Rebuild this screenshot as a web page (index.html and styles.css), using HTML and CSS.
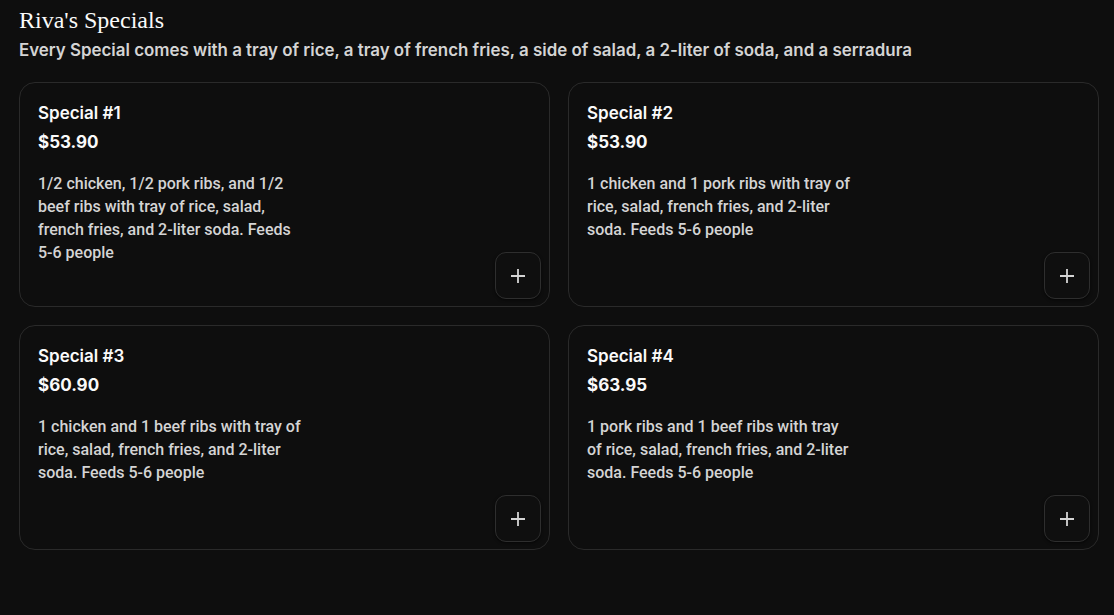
FILE: index.html
```html
<!DOCTYPE html>
<html lang="en">
<head>
<meta charset="utf-8">
<title>Riva's Specials</title>
<link rel="stylesheet" href="styles.css">
</head>
<body>
<main class="page">
  <h1 class="title">Riva's Specials</h1>
  <p class="subtitle">Every Special comes with a tray of rice, a tray of french fries, a side of salad, a 2-liter of soda, and a serradura</p>
  <section class="grid">
    <article class="card">
      <div class="card-body">
        <h2 class="card-name">Special #1</h2>
        <p class="card-price">$53.90</p>
        <p class="card-desc">1/2 chicken, 1/2 pork ribs, and 1/2 beef ribs with tray of rice, salad, french fries, and 2-liter soda. Feeds 5-6 people</p>
      </div>
      <button class="add-btn" aria-label="Add"><svg viewBox="0 0 16 16" width="16" height="16"><path d="M8 1v14M1 8h14"/></svg></button>
    </article>
    <article class="card">
      <div class="card-body">
        <h2 class="card-name">Special #2</h2>
        <p class="card-price">$53.90</p>
        <p class="card-desc">1 chicken and 1 pork ribs with tray of rice, salad, french fries, and 2-liter soda. Feeds 5-6 people</p>
      </div>
      <button class="add-btn" aria-label="Add"><svg viewBox="0 0 16 16" width="16" height="16"><path d="M8 1v14M1 8h14"/></svg></button>
    </article>
    <article class="card">
      <div class="card-body">
        <h2 class="card-name">Special #3</h2>
        <p class="card-price">$60.90</p>
        <p class="card-desc">1 chicken and 1 beef ribs with tray of rice, salad, french fries, and 2-liter soda. Feeds 5-6 people</p>
      </div>
      <button class="add-btn" aria-label="Add"><svg viewBox="0 0 16 16" width="16" height="16"><path d="M8 1v14M1 8h14"/></svg></button>
    </article>
    <article class="card">
      <div class="card-body">
        <h2 class="card-name">Special #4</h2>
        <p class="card-price">$63.95</p>
        <p class="card-desc">1 pork ribs and 1 beef ribs with tray of rice, salad, french fries, and 2-liter soda. Feeds 5-6 people</p>
      </div>
      <button class="add-btn" aria-label="Add"><svg viewBox="0 0 16 16" width="16" height="16"><path d="M8 1v14M1 8h14"/></svg></button>
    </article>
  </section>
</main>
</body>
</html>
```

FILE: styles.css
```css
html, body {
  margin: 0;
  background: #0e0e0e;
}
body {
  font-family: Inter, "Noto Sans", sans-serif;
  color: #fafafa;
}
.page {
  padding: 5px 15px 0 19px;
}
.title {
  margin: 0;
  font-family: "Liberation Serif", "DejaVu Serif", serif;
  font-weight: 400;
  font-size: 24px;
  line-height: 30px;
  color: #fafafa;
}
.subtitle {
  margin: 1px 0 0;
  font-size: 16.9px;
  line-height: 28px;
  font-weight: 600;
  color: #d4d4d4;
}
.grid {
  margin-top: 18px;
  display: grid;
  grid-template-columns: 1fr 1fr;
  gap: 18px;
}
.card {
  box-sizing: border-box;
  height: 225px;
  border: 1px solid #2a2a2a;
  border-radius: 16px;
  padding: 16px 8px 7px 18px;
  display: flex;
  align-items: flex-start;
  background: #0e0e0e;
}
.card-body {
  flex: 1;
  min-width: 0;
}
.card-name {
  margin: 0;
  font-size: 17px;
  line-height: 28px;
  font-weight: 600;
  color: #fafafa;
}
.card-price {
  margin: 1px 0 0;
  font-size: 17px;
  line-height: 28px;
  font-weight: 700;
  color: #fafafa;
}
.card-desc {
  margin: 16px 0 0;
  max-width: 266px;
  font-family: Roboto, "Noto Sans", sans-serif;
  font-size: 16px;
  line-height: 23px;
  font-weight: 500;
  color: #d4d4d4;
}
.add-btn {
  flex-shrink: 0;
  align-self: flex-end;
  width: 46px;
  height: 47px;
  border: 1px solid #2e2e2e;
  border-radius: 11px;
  background: #0f0f0f;
  box-shadow: 0 1px 3px rgba(0, 0, 0, 0.6);
  display: flex;
  align-items: center;
  justify-content: center;
  padding: 0;
  cursor: pointer;
}
.add-btn svg {
  stroke: #d4d4d4;
  stroke-width: 1.8;
  fill: none;
}
```
